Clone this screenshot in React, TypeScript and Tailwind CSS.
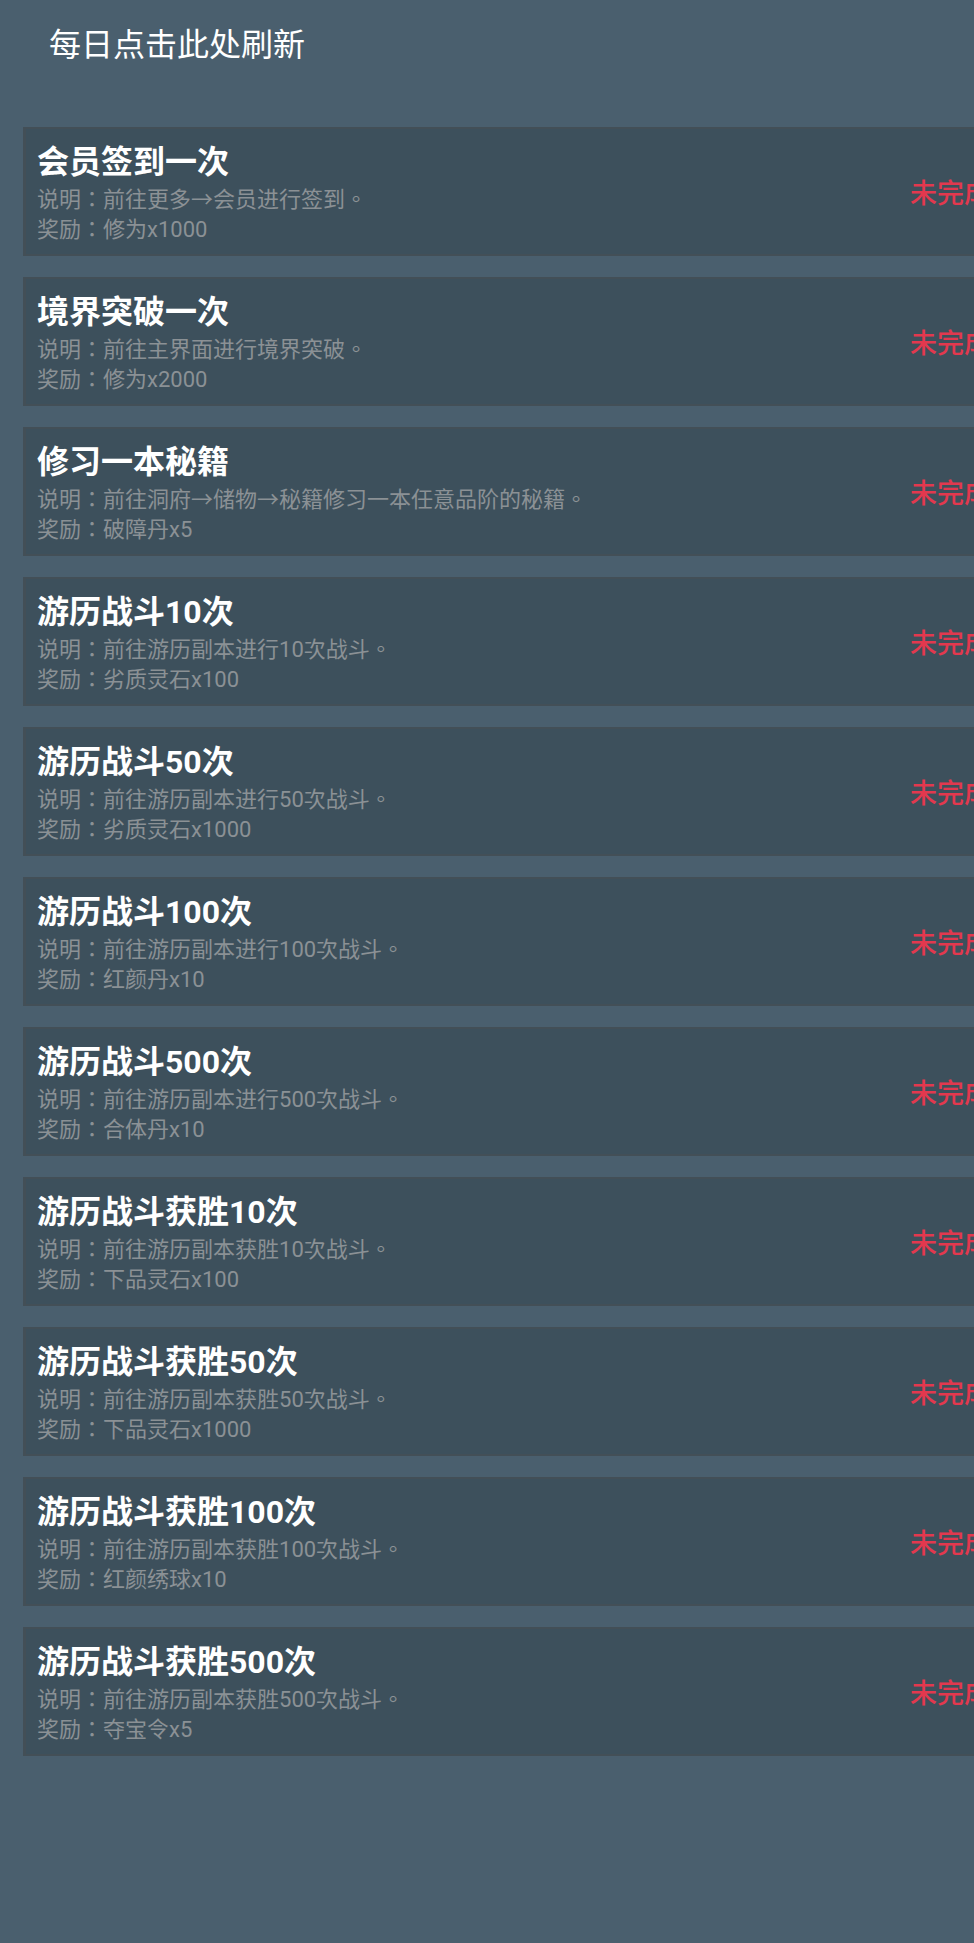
const tasks = [
  { title: "会员签到一次", desc: "前往更多→会员进行签到。", reward: "修为x1000" },
  { title: "境界突破一次", desc: "前往主界面进行境界突破。", reward: "修为x2000" },
  { title: "修习一本秘籍", desc: "前往洞府→储物→秘籍修习一本任意品阶的秘籍。", reward: "破障丹x5" },
  { title: "游历战斗10次", desc: "前往游历副本进行10次战斗。", reward: "劣质灵石x100" },
  { title: "游历战斗50次", desc: "前往游历副本进行50次战斗。", reward: "劣质灵石x1000" },
  { title: "游历战斗100次", desc: "前往游历副本进行100次战斗。", reward: "红颜丹x10" },
  { title: "游历战斗500次", desc: "前往游历副本进行500次战斗。", reward: "合体丹x10" },
  { title: "游历战斗获胜10次", desc: "前往游历副本获胜10次战斗。", reward: "下品灵石x100" },
  { title: "游历战斗获胜50次", desc: "前往游历副本获胜50次战斗。", reward: "下品灵石x1000" },
  { title: "游历战斗获胜100次", desc: "前往游历副本获胜100次战斗。", reward: "红颜绣球x10" },
  { title: "游历战斗获胜500次", desc: "前往游历副本获胜500次战斗。", reward: "夺宝令x5" },
];

const tcFont = { fontFamily: 'Roboto, "Noto Sans CJK TC", sans-serif' };

function TaskCard({ title, desc, reward }: { title: string; desc: string; reward: string }) {
  return (
    <div className="flex items-center w-[1000px] h-[129px] shrink-0 bg-[#3d505c] border-2 border-l-[3px] border-[#434f57] pl-[11px] pr-[30px] pt-[13px] pb-[8px]">
      <div className="flex-1 flex flex-col self-start">
        <div className="text-[32px] leading-[40px] font-bold text-white">{title}</div>
        <div className="mt-[3px] text-[22px] leading-[30px] text-[#8b9195]" style={tcFont}>说明：{desc}</div>
        <div className="text-[22px] leading-[30px] text-[#8b9195]" style={tcFont}>奖励：{reward}</div>
      </div>
      <div className="text-[27px] font-medium text-[#e3384e] whitespace-nowrap">未完成</div>
    </div>
  );
}

export default function App() {
  return (
    <div
      className="w-[974px] min-h-[1943px] overflow-hidden bg-[#4a5f6e]"
      style={{ fontFamily: 'Roboto, "Noto Sans CJK SC", sans-serif' }}
    >
      <div className="h-[90px] pl-[49px] flex items-center text-[32px] text-white">每日点击此处刷新</div>
      <div className="flex flex-col gap-[21px] pt-[37px] pl-[23px]">
        {tasks.map((t) => (
          <TaskCard key={t.title} {...t} />
        ))}
      </div>
    </div>
  );
}
